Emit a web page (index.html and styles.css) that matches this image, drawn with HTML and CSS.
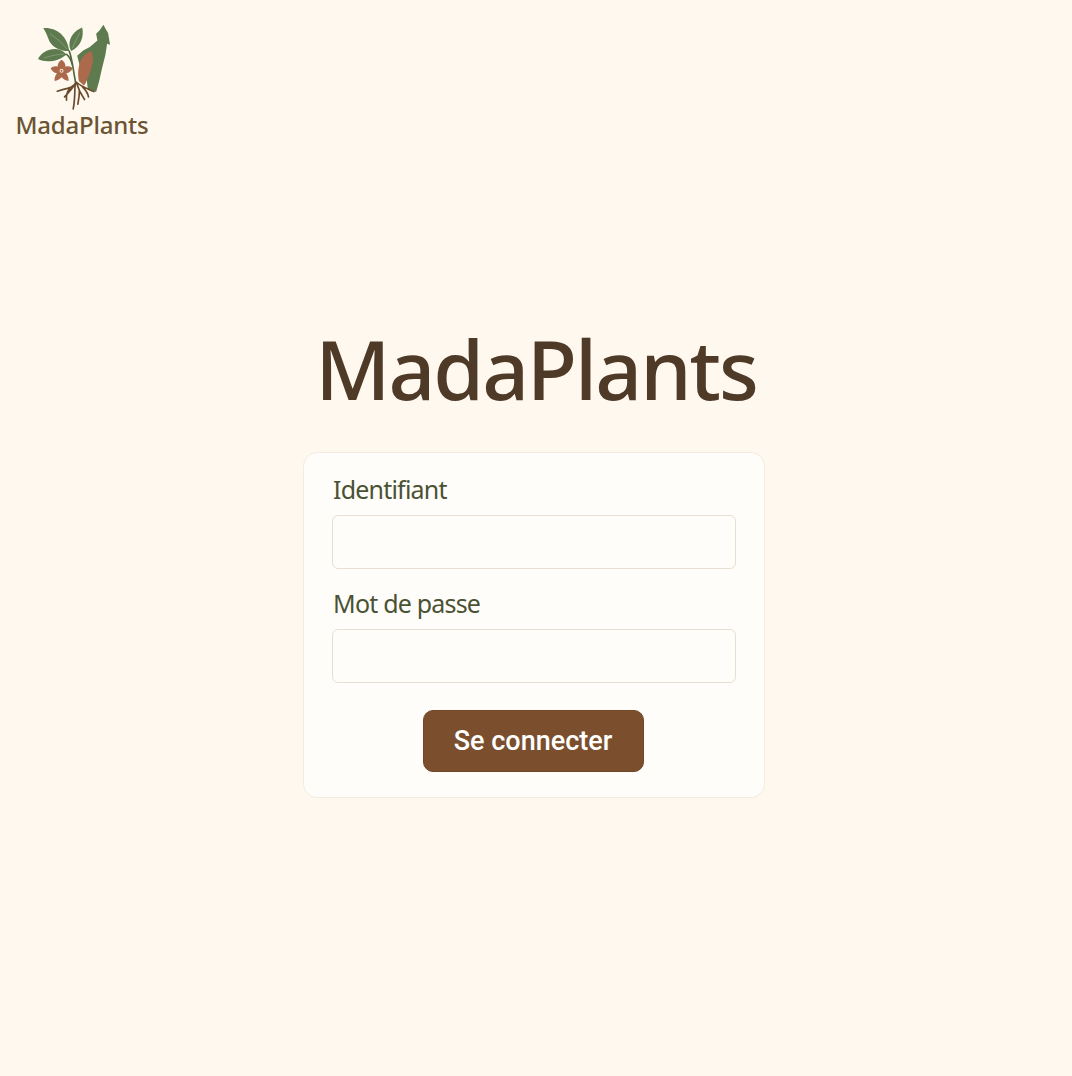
FILE: index.html
```html
<!DOCTYPE html>
<html lang="fr">
<head>
<meta charset="utf-8">
<title>MadaPlants</title>
<link rel="stylesheet" href="styles.css">
</head>
<body>
<header class="brand">
  <svg class="brand-mark" viewBox="100 40 292 264" width="97" height="88" aria-hidden="true">
    <path class="green" d="M309 45L317 60L323 70L329 105L320 102L315 135L305 175L296 215L287 247L262 238L258 205L240 175L233 150L230 138L248 122L268 112L282 100L291 92L287 72L297 62Z"/>
    <path class="clay" d="M272 124C280 140 278 160 270 184C263 204 256 222 250 228L235 214C230 190 234 165 244 146C252 134 262 128 272 124Z"/>
    <path class="green" d="M128 55C168 52 200 78 206 124C172 124 150 108 143 86C139 74 134 64 128 55Z"/>
    <path class="green" d="M245 53C252 82 238 112 212 124C198 100 212 66 245 53Z"/>
    <path class="green" d="M112 148C128 118 172 106 198 134C172 156 136 160 112 148Z"/>
    <path class="vein" d="M148 72C168 85 186 100 200 118M130 145C150 138 172 134 190 133M238 68C230 85 222 100 215 116"/>
    <path class="stem" d="M206 124C216 150 218 185 226 222M198 134C206 140 212 150 216 168"/>
    <path class="clay" d="M183 150C190 154 195 162 195 171C203 168 211 170 217 176C213 184 206 190 197 191C202 198 205 206 204 214C196 213 188 209 183 203C178 209 170 213 162 214C161 206 164 198 169 191C160 190 153 184 150 176C156 170 164 168 171 171C171 162 176 154 183 150Z"/>
    <circle class="core" cx="183" cy="183" r="6"/>
    <circle class="clay" cx="183" cy="183" r="3"/>
    <path class="root" d="M226 218C222 232 204 236 186 240L170 245M226 218C216 238 204 248 192 262M224 222C222 245 224 270 218 298M228 220C234 240 244 258 252 270M228 218C240 230 262 238 280 246M208 236C200 246 196 256 198 272M236 240C238 254 234 270 232 284M246 232C254 240 262 250 264 262"/>
  </svg>
  <span class="brand-name">MadaPlants</span>
</header>
<main class="login">
  <h1 class="title">MadaPlants</h1>
  <form class="card">
    <label class="field">
      <span class="field-label">Identifiant</span>
      <input class="field-input" type="text">
    </label>
    <label class="field">
      <span class="field-label">Mot de passe</span>
      <input class="field-input" type="password">
    </label>
    <button class="submit" type="button">Se connecter</button>
  </form>
</main>
</body>
</html>
```
FILE: styles.css
```css
* { box-sizing: border-box; }
html, body { margin: 0; height: 100%; }
body {
  background: #fef8ee;
  font-family: "Noto Sans", sans-serif;
  display: flex;
  flex-direction: column;
  overflow: hidden;
}
.brand {
  position: absolute;
  top: 23px;
  left: 15px;
  display: flex;
  flex-direction: column;
  align-items: center;
  width: 134px;
}
.brand-mark { display: block; }
.brand-name {
  font-size: 24px;
  font-weight: 500;
  line-height: 24px;
  margin-top: 2px;
  color: #6b5433;
  letter-spacing: -0.2px;
}
.green { fill: #5e7a4f; }
.clay { fill: #ac6a4c; }
.core { fill: #f4e3d4; }
.vein { fill: none; stroke: #a5b896; stroke-width: 1.5; }
.stem { fill: none; stroke: #4d6a3c; stroke-width: 5; stroke-linecap: round; }
.root { fill: none; stroke: #6b4a2c; stroke-width: 5; stroke-linecap: round; }
.login {
  display: flex;
  flex-direction: column;
  align-items: center;
  padding-top: 316px;
}
.title {
  margin: 0 0 32px 0;
  font-size: 82px;
  line-height: 104px;
  font-weight: 500;
  letter-spacing: -2px;
  color: #4f3a28;
}
.card {
  width: 462px;
  height: 346px;
  margin-right: 4px;
  background: #fffdfa;
  border: 1px solid #f3ebdf;
  border-radius: 14px;
  padding: 19px 28px 25px;
  display: flex;
  flex-direction: column;
  align-items: center;
}
.field {
  display: flex;
  flex-direction: column;
  width: 100%;
  margin-bottom: 17px;
}
.field + .field { margin-bottom: 27px; }
.field-label {
  font-size: 25px;
  line-height: 34px;
  color: #4a5233;
  margin-bottom: 9px;
  padding-left: 1px;
  letter-spacing: -0.8px;
}
.field-input {
  height: 54px;
  width: 100%;
  background: #fffdfa;
  border: 1px solid #e8dfd3;
  border-radius: 6px;
}
.submit {
  width: 221px;
  height: 62px;
  margin-right: 2px;
  background: #7b4f2d;
  border: 1px solid #734827;
  border-radius: 10px;
  color: #fff;
  font-family: Roboto, sans-serif;
  font-size: 27px;
  font-weight: 500;
}
```
